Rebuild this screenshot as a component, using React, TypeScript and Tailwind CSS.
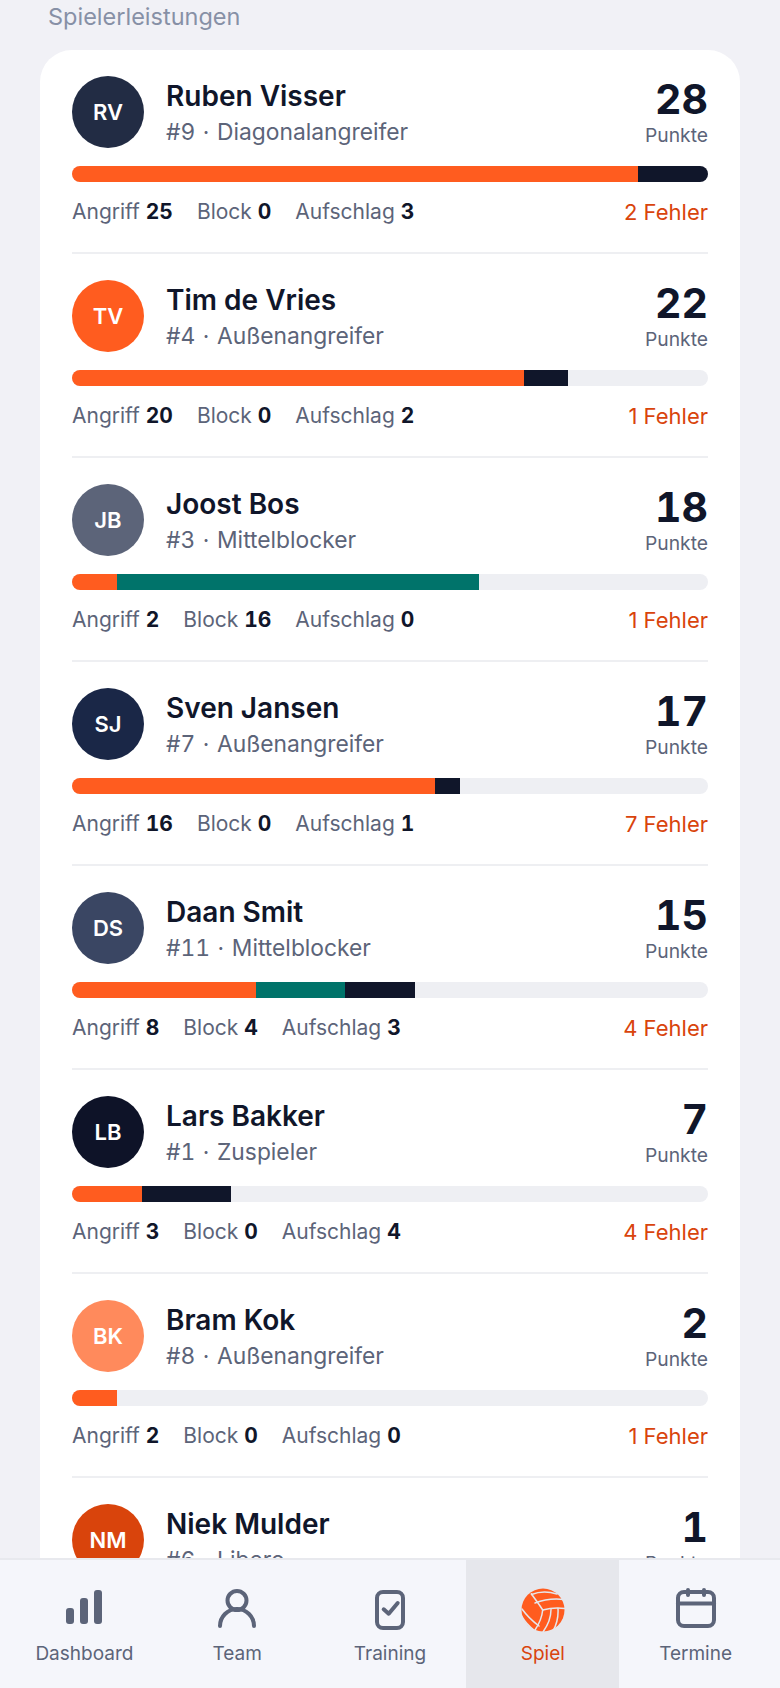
interface Player {
  initials: string;
  name: string;
  meta: string;
  points: number;
  attack: number;
  block: number;
  serve: number;
  errors: number;
  avatar: string;
}

const players: Player[] = [
  { initials: 'RV', name: 'Ruben Visser', meta: '#9 · Diagonalangreifer', points: 28, attack: 25, block: 0, serve: 3, errors: 2, avatar: 'bg-[#222c44]' },
  { initials: 'TV', name: 'Tim de Vries', meta: '#4 · Außenangreifer', points: 22, attack: 20, block: 0, serve: 2, errors: 1, avatar: 'bg-[#ff5c1f]' },
  { initials: 'JB', name: 'Joost Bos', meta: '#3 · Mittelblocker', points: 18, attack: 2, block: 16, serve: 0, errors: 1, avatar: 'bg-[#5c6479]' },
  { initials: 'SJ', name: 'Sven Jansen', meta: '#7 · Außenangreifer', points: 17, attack: 16, block: 0, serve: 1, errors: 7, avatar: 'bg-[#1a2747]' },
  { initials: 'DS', name: 'Daan Smit', meta: '#11 · Mittelblocker', points: 15, attack: 8, block: 4, serve: 3, errors: 4, avatar: 'bg-[#3a4663]' },
  { initials: 'LB', name: 'Lars Bakker', meta: '#1 · Zuspieler', points: 7, attack: 3, block: 0, serve: 4, errors: 4, avatar: 'bg-[#0e1328]' },
  { initials: 'BK', name: 'Bram Kok', meta: '#8 · Außenangreifer', points: 2, attack: 2, block: 0, serve: 0, errors: 1, avatar: 'bg-[#ff8a5c]' },
  { initials: 'NM', name: 'Niek Mulder', meta: '#6 · Libero', points: 1, attack: 1, block: 0, serve: 0, errors: 0, avatar: 'bg-[#d9440c]' },
];

const pct = (v: number) => `${Math.round((v / 28) * 100)}%`;

function Stat({ label, value }: { label: string; value: number }) {
  return (
    <span>
      {label} <span className="font-bold text-[#10162a] tabular-nums">{value}</span>
    </span>
  );
}

function PlayerRow({ player, last }: { player: Player; last: boolean }) {
  return (
    <div className={`pt-[26px] ${last ? '' : 'border-b-2 border-[#eeeff2]'}`}>
      <div className="flex items-center gap-[22px]">
        <div className={`flex h-[72px] w-[72px] shrink-0 items-center justify-center rounded-full text-[22px] font-semibold text-white ${player.avatar}`}>
          {player.initials}
        </div>
        <div className="min-w-0 flex-1">
          <div className="text-[28px] leading-[40px] font-semibold text-[#10162a]">{player.name}</div>
          <div className="text-[22.8px] leading-[32px] text-[#5c6479] tabular-nums [word-spacing:1.5px]">{player.meta}</div>
        </div>
        <div className="text-right">
          <div className="text-[41px] leading-[47px] font-bold text-[#10162a] tabular-nums">{player.points}</div>
          <div className="text-[19.3px] leading-[25px] text-[#5c6479]">Punkte</div>
        </div>
      </div>
      <div className="mt-[18px] flex h-4 overflow-hidden rounded-full bg-[#eeeff3]">
        <div className="bg-[#ff5c1f]" style={{ width: pct(player.attack) }} />
        <div className="bg-[#00736a]" style={{ width: pct(player.block) }} />
        <div className="bg-[#10162a]" style={{ width: pct(player.serve) }} />
      </div>
      <div className="flex h-[70px] items-center justify-between pb-[10px] text-[21px] text-[#5c6479]">
        <div className="flex gap-6">
          <Stat label="Angriff" value={player.attack} />
          <Stat label="Block" value={player.block} />
          <Stat label="Aufschlag" value={player.serve} />
        </div>
        <span className="text-[22px] text-[#d9440c]">{player.errors} Fehler</span>
      </div>
    </div>
  );
}

function BarsIcon() {
  return (
    <svg width="40" height="40" viewBox="0 0 40 40" fill="#5c6479">
      <rect x="2" y="18" width="8" height="16" rx="3" />
      <rect x="16" y="8" width="8" height="26" rx="3" />
      <rect x="30" y="0" width="8" height="34" rx="3" />
    </svg>
  );
}

function PersonIcon() {
  return (
    <svg width="44" height="44" viewBox="0 0 44 44" fill="none" stroke="#5c6479" strokeWidth="4" strokeLinecap="round">
      <circle cx="22" cy="12.5" r="9.5" />
      <path d="M5 38a17 17 0 0 1 34 0" />
    </svg>
  );
}

function CheckIcon() {
  return (
    <svg width="44" height="44" viewBox="0 0 44 44" fill="none" stroke="#5c6479" strokeWidth="4" strokeLinecap="round" strokeLinejoin="round">
      <rect x="9" y="4" width="26" height="36" rx="6" />
      <path d="M15.7 21.3l5 4.4 9-10.7" />
    </svg>
  );
}

function CalendarIcon() {
  return (
    <svg width="44" height="44" viewBox="0 0 44 44" fill="none" stroke="#5c6479" strokeWidth="4" strokeLinecap="round" strokeLinejoin="round">
      <rect x="4" y="4" width="36" height="34" rx="6" />
      <path d="M4 15.5h36" />
      <path d="M14 2v5M30 2v5" />
    </svg>
  );
}

function BallIcon() {
  return (
    <svg width="44" height="44" viewBox="0 0 44 44" fill="none" stroke="#e6e7ec" strokeWidth="1.5" strokeLinecap="round">
      <circle cx="22" cy="22" r="21.5" fill="#ff5c1f" stroke="none" />
      <path d="M21.7 22C18 16 14 11 10.3 5.8" />
      <path d="M10.5 6.5C18 3.5 28 3.5 36 6" />
      <path d="M14 15C23 11.5 34 10.5 43 11.5" />
      <path d="M21.7 22C29 20 37 19.5 44 20.5" />
      <path d="M21.7 22C21 29 18 36 14 42" />
      <path d="M1 21C6 28 12 33.5 18 38" />
      <path d="M0.5 28C4 34 8 38.5 13 42" />
      <path d="M30 21.5C30 29 27 37 22 44" />
      <path d="M37 20.5C37.5 29 36 36 32 43" />
    </svg>
  );
}

const navItems = [
  { label: 'Dashboard', icon: <BarsIcon /> },
  { label: 'Team', icon: <PersonIcon /> },
  { label: 'Training', icon: <CheckIcon /> },
  { label: 'Spiel', icon: <BallIcon />, active: true },
  { label: 'Termine', icon: <CalendarIcon /> },
];

export default function App() {
  return (
    <div className="flex h-[1688px] flex-col overflow-hidden bg-[#f1f1f6] font-['Inter',sans-serif]">
      <main className="min-h-0 flex-1 overflow-hidden px-10">
        <h2 className="pl-2 text-[23.5px] leading-[34px] text-[#8790a6]">Spielerleistungen</h2>
        <div className="mt-4 rounded-[32px] bg-white px-8">
          {players.map((p, i) => (
            <PlayerRow key={p.initials} player={p} last={i === players.length - 1} />
          ))}
        </div>
      </main>
      <nav className="flex h-[130px] shrink-0 border-t-2 border-[#e8e9ee] bg-[#f5f6fb] px-2">
        {navItems.map((item) => (
          <div
            key={item.label}
            className={`flex flex-1 flex-col items-center pt-7 ${item.active ? 'bg-[#e6e7ec] text-[#d9440c]' : 'text-[#5c6479]'}`}
          >
            <div className="flex h-11 items-center justify-center">{item.icon}</div>
            <span className="mt-2 text-[19px] leading-7">{item.label}</span>
          </div>
        ))}
      </nav>
    </div>
  );
}
